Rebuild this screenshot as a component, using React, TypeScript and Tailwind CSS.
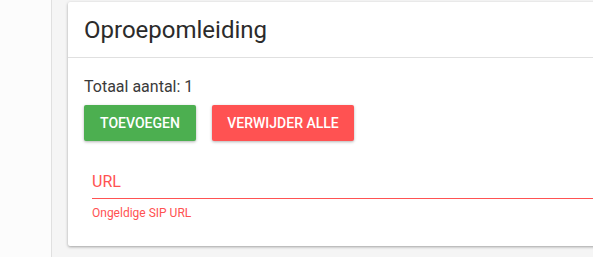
import React from 'react';

const App: React.FC = () => {
  return (
    <div
      className="flex w-[593px] h-[257px] overflow-hidden bg-[#f5f5f5]"
      style={{ fontFamily: 'Roboto, "Noto Sans", sans-serif' }}
    >
      {/* Sidebar strip */}
      <div className="w-[52px] shrink-0 h-full bg-[#fcfcfc] border-r border-[#e0e0e0]" />

      {/* Content */}
      <div className="flex-1 pl-[16px] pt-[2px] min-w-0">
        <div className="w-[560px] h-[244px] bg-white rounded-[2px] shadow-[0_1px_3px_rgba(0,0,0,0.35)] flex flex-col">
          <div className="h-[56px] px-[16px] flex items-center border-b border-[#e0e0e0]">
            <h1 className="text-[24px] font-normal text-[#2b2b2b] leading-none">Oproepomleiding</h1>
          </div>

          <div className="px-[16px] pt-[20px]">
            <p className="text-[16px] text-[#3a3a3a] leading-[18px]">Totaal aantal: 1</p>
            <div className="flex gap-[16px] mt-[9px]">
              <button className="w-[112px] h-[36px] rounded-[2px] bg-[#4caf50] text-white text-[14px] font-medium uppercase shadow-[0_1px_3px_rgba(0,0,0,0.3)]">
                Toevoegen
              </button>
              <button className="w-[142px] h-[36px] rounded-[2px] bg-[#ff5252] text-white text-[14px] font-medium uppercase shadow-[0_1px_3px_rgba(0,0,0,0.3)]">
                Verwijder alle
              </button>
            </div>

            <div className="pl-[8px] mt-[31px]">
              <div className="text-[16px] text-[#ff5252] leading-[20px] pb-[6px] border-b border-[#ff5252]">URL</div>
              <p className="text-[12px] text-[#ff5252] mt-[7px] leading-[14px]">Ongeldige SIP URL</p>
            </div>
          </div>
        </div>
      </div>
    </div>
  );
};

export default App;
